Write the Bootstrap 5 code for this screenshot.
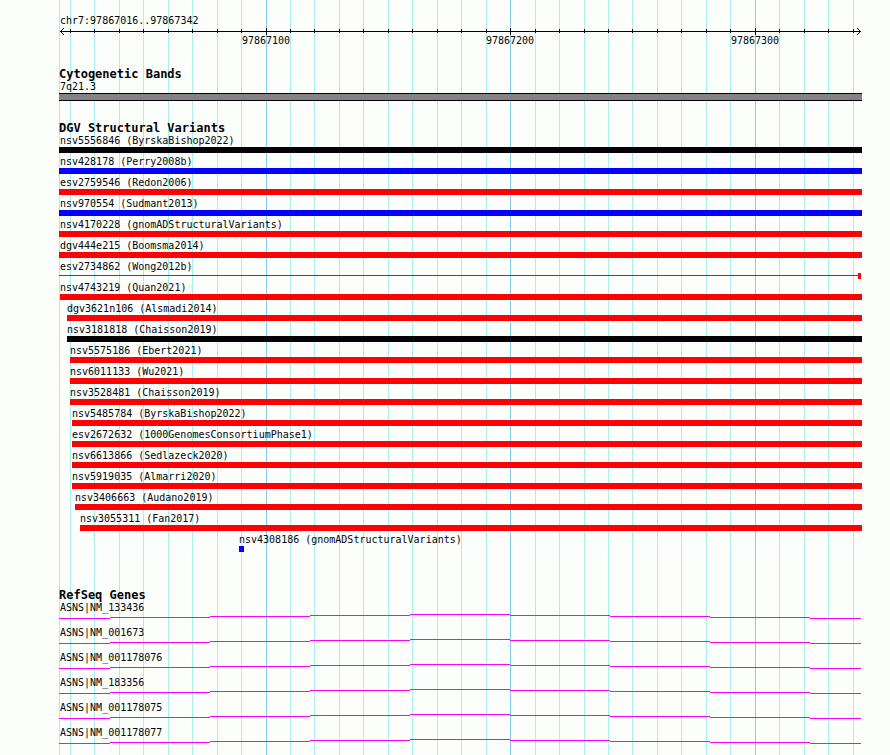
<!DOCTYPE html>
<html lang="en">
<head>
<meta charset="utf-8">
<meta name="viewport" content="width=device-width, initial-scale=1">
<title>chr7:97867016..97867342</title>
<link rel="stylesheet" href="https://cdn.jsdelivr.net/npm/bootstrap@5.3.0/dist/css/bootstrap.min.css">
<style>
  :root { --ink: #040204; --gain: #0402fc; --loss: #fc0204; --gene: #fc02fc; }
  body { background: #fcfefc; color: var(--ink); font-family: "DejaVu Sans Mono", "Liberation Mono", monospace; font-size: 10px; line-height: 11px; }
  .browser { padding: 15px 28px 0 59px; }
  .plot-grid { left: 59px; right: 28px; top: 0; bottom: 0; }
  .plot-grid svg, .ruler { width: 100%; height: 100%; overflow: visible; shape-rendering: crispEdges; }
  .ruler { height: 21px; }
  .ruler text { font-size: 10px; fill: var(--ink); text-anchor: middle; }
  .track { margin-top: 21px; }
  .track-genes { margin-top: 35px; }
  .track-title { font-size: 12px; line-height: 12px; font-weight: 700; }
  .feature { padding-bottom: 2px; }
  .feature-name { height: 11px; line-height: 13px; margin-bottom: 2px; white-space: nowrap; }
  .inset-name { padding-left: 1px; }
  .glyph { height: 6px; background: var(--loss); }
  .glyph-complex { background: var(--ink); }
  .glyph-gain { background: var(--gain); }
  .glyph-short { width: 5px; }
  .glyph-thin { background: linear-gradient(var(--loss), var(--loss)) 0 2px / 100% 1px no-repeat; margin-right: 1px; }
  .glyph-end { width: 3px; height: 6px; background: var(--loss); }
  .glyph-band { height: 8px; background: #848284; border: solid var(--ink); border-width: 1px 0; }
  .track-bands .feature { padding-bottom: 0; }
  .gene { padding-bottom: 7px; }
  .gene svg { width: 100%; height: 5px; shape-rendering: crispEdges; fill: var(--gene); }
</style>
<script src="https://cdn.jsdelivr.net/npm/bootstrap@5.3.0/dist/js/bootstrap.bundle.min.js"></script>
</head>
<body>
<main class="browser position-relative min-vh-100 overflow-hidden">
  <div class="plot-grid position-absolute" aria-hidden="true"><svg id="grid" class="d-block"></svg></div>

  <div class="position-relative">
    <header>
      <div class="inset-name">chr7:97867016..97867342</div>
      <svg id="ruler" class="ruler d-block" role="img" aria-label="Position ruler">
        <g fill="#040204">
          <path d="M1 5h1v1H1zM2 4h1v1H2zM2 6h1v1H2zM3 3h1v1H3zM3 7h1v1H3zM4 2h1v1H4zM4 8h1v1H4z"/>
          <svg x="100%" overflow="visible"><path d="M-2 5h1v1h-1zM-3 4h1v1h-1zM-3 6h1v1h-1zM-4 3h1v1h-1zM-4 7h1v1h-1zM-5 2h1v1h-1zM-5 8h1v1h-1z"/></svg>
        </g>
      </svg>
    </header>

    <section class="track track-bands">
      <h2 class="track-title mb-0">Cytogenetic Bands</h2>
      <div class="feature"><div class="feature-name inset-name">7q21.3</div><div class="glyph-band"></div></div>
    </section>

    <section class="track">
      <h2 class="track-title mb-0">DGV Structural Variants</h2>
      <div class="feature"><div class="feature-name inset-name">nsv5556846 (ByrskaBishop2022)</div><div class="glyph glyph-complex"></div></div>
      <div class="feature"><div class="feature-name inset-name">nsv428178 (Perry2008b)</div><div class="glyph glyph-gain"></div></div>
      <div class="feature"><div class="feature-name inset-name">esv2759546 (Redon2006)</div><div class="glyph"></div></div>
      <div class="feature"><div class="feature-name inset-name">nsv970554 (Sudmant2013)</div><div class="glyph glyph-gain"></div></div>
      <div class="feature"><div class="feature-name inset-name">nsv4170228 (gnomADStructuralVariants)</div><div class="glyph"></div></div>
      <div class="feature"><div class="feature-name inset-name">dgv444e215 (Boomsma2014)</div><div class="glyph"></div></div>
      <div class="feature"><div class="feature-name inset-name">esv2734862 (Wong2012b)</div><div class="glyph glyph-thin d-flex justify-content-end"><div class="glyph-end"></div></div></div>
      <div class="feature" style="margin-left:0.125%"><div class="feature-name">nsv4743219 (Quan2021)</div><div class="glyph"></div></div>
      <div class="feature" style="margin-left:0.996%"><div class="feature-name">dgv3621n106 (Alsmadi2014)</div><div class="glyph"></div></div>
      <div class="feature" style="margin-left:0.996%"><div class="feature-name">nsv3181818 (Chaisson2019)</div><div class="glyph glyph-complex"></div></div>
      <div class="feature" style="margin-left:1.37%"><div class="feature-name">nsv5575186 (Ebert2021)</div><div class="glyph"></div></div>
      <div class="feature" style="margin-left:1.37%"><div class="feature-name">nsv6011133 (Wu2021)</div><div class="glyph"></div></div>
      <div class="feature" style="margin-left:1.37%"><div class="feature-name">nsv3528481 (Chaisson2019)</div><div class="glyph"></div></div>
      <div class="feature" style="margin-left:1.619%"><div class="feature-name">nsv5485784 (ByrskaBishop2022)</div><div class="glyph"></div></div>
      <div class="feature" style="margin-left:1.619%"><div class="feature-name">esv2672632 (1000GenomesConsortiumPhase1)</div><div class="glyph"></div></div>
      <div class="feature" style="margin-left:1.619%"><div class="feature-name">nsv6613866 (Sedlazeck2020)</div><div class="glyph"></div></div>
      <div class="feature" style="margin-left:1.619%"><div class="feature-name">nsv5919035 (Almarri2020)</div><div class="glyph"></div></div>
      <div class="feature" style="margin-left:1.993%"><div class="feature-name">nsv3406663 (Audano2019)</div><div class="glyph"></div></div>
      <div class="feature" style="margin-left:2.615%"><div class="feature-name">nsv3055311 (Fan2017)</div><div class="glyph"></div></div>
      <div class="feature" style="margin-left:22.416%"><div class="feature-name">nsv4308186 (gnomADStructuralVariants)</div><div class="glyph glyph-gain glyph-short"></div></div>
    </section>

    <section class="track-genes">
      <h2 class="track-title mb-0">RefSeq Genes</h2>
      <svg class="d-none"><symbol id="intron" viewBox="0 0 803 5" preserveAspectRatio="none"><path d="M0 4h51v1H0zM51 3h100v1H51zM151 2h100v1H151zM251 1h100v1H251zM351 0h100v1H351zM451 1h100v1H451zM551 2h100v1H551zM651 3h100v1H651zM751 4h51v1H751z"/></symbol></svg>
      <div class="gene"><div class="feature-name inset-name">ASNS|NM_133436</div><svg class="d-block"><use href="#intron"/></svg></div>
      <div class="gene"><div class="feature-name inset-name">ASNS|NM_001673</div><svg class="d-block"><use href="#intron"/></svg></div>
      <div class="gene"><div class="feature-name inset-name">ASNS|NM_001178076</div><svg class="d-block"><use href="#intron"/></svg></div>
      <div class="gene"><div class="feature-name inset-name">ASNS|NM_183356</div><svg class="d-block"><use href="#intron"/></svg></div>
      <div class="gene"><div class="feature-name inset-name">ASNS|NM_001178075</div><svg class="d-block"><use href="#intron"/></svg></div>
      <div class="gene"><div class="feature-name inset-name">ASNS|NM_001178077</div><svg class="d-block"><use href="#intron"/></svg></div>
    </section>
  </div>
</main>
<script>
  // Grid lines and ruler ticks every 10 bp, stronger ones every 100 bp
  const start = 97867016, span = 327, plot = 803, inner = 800;
  const add = (parent, tag, attrs, text) => {
    const el = document.createElementNS('http://www.w3.org/2000/svg', tag);
    for (const k in attrs) el.setAttribute(k, attrs[k]);
    if (text) el.textContent = text;
    parent.appendChild(el);
  };
  const grid = document.getElementById('grid'), ruler = document.getElementById('ruler');
  const gridLine = (x, fill) => add(grid, 'rect', { x, y: 0, width: 1, height: '100%', fill });
  gridLine(0, '#aceeec');
  add(ruler, 'rect', { x: 1, y: 5, width: '99.8%', height: 1, fill: '#040204' });
  for (let bp = 97867020; bp < start + span; bp += 10) {
    const x = Math.round(1 + (bp - start) * inner / span) / plot * 100 + '%';
    const major = bp % 100 === 0;
    gridLine(x, major ? '#84ceec' : '#aceeec');
    add(ruler, 'rect', { x, y: major ? 2 : 3, width: 1, height: major ? 7 : 4, fill: '#040204' });
    if (major) add(ruler, 'text', { x, y: 18 }, String(bp));
  }
</script>
</body>
</html>
